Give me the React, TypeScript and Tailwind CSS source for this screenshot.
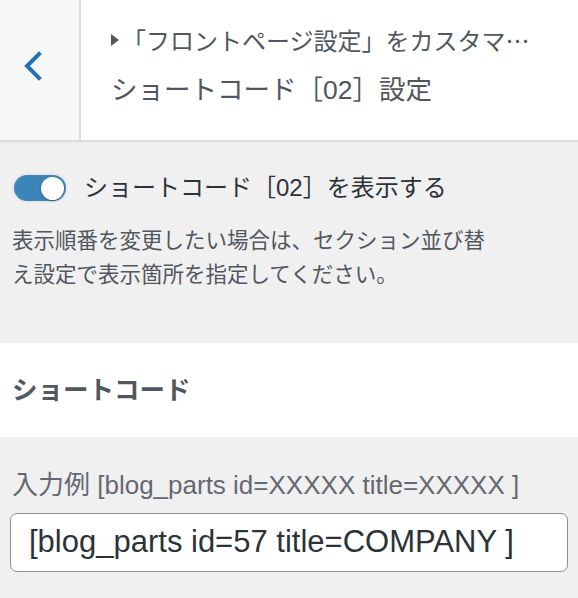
const jp = "font-['Helvetica_Neue','Liberation_Sans','Noto_Sans_CJK_JP',sans-serif]";
const cjk = "font-['Noto_Sans_CJK_JP',sans-serif]";

function Toggle() {
  return (
    <div className="rounded-full bg-[#e6e7e8] p-[2px]">
      <div className="flex h-[26px] w-[52px] items-center justify-end rounded-full bg-[#3c85b8] px-[2px]">
        <div className="h-[23px] w-[23px] rounded-full bg-white shadow-[0_1px_2px_rgba(0,0,0,0.35)]" />
      </div>
    </div>
  );
}

export default function App() {
  return (
    <div className={`h-[598px] w-[578px] overflow-hidden bg-[#f0f0f0] ${jp}`}>
      <div className="flex h-[142px] border-b-2 border-[#dcdcde] bg-white">
        <div className="flex w-[81px] items-start border-r-2 border-[#dcdcde] bg-[#f6f7f7] pl-[22px] pt-[51px]">
          <svg width="20" height="30" viewBox="0 0 20 30" fill="none">
            <polyline points="17,3 5,15 17,27" stroke="#2271b1" strokeWidth="4" strokeLinecap="square" strokeLinejoin="miter" />
          </svg>
        </div>
        <div className="flex flex-col pl-[30px] pt-[22px] text-[#50575e]">
          <div className="flex items-center text-[24px] leading-[36px]">
            <svg width="8" height="12" viewBox="0 0 8 12" className="mr-[3px]">
              <polygon points="0,0 8,6 0,12" fill="#50575e" />
            </svg>
            <span className={cjk}>「フロントページ設定」をカスタマ…</span>
          </div>
          <div className="mt-[14px] text-[26.5px] leading-[36px]">ショートコード［02］設定</div>
        </div>
      </div>

      <div className="px-[12px] pt-[30px]">
        <div className="flex items-center gap-[16px]">
          <Toggle />
          <span className="text-[24px] leading-[32px] text-[#2c3338]">ショートコード［02］を表示する</span>
        </div>
        <p className="mt-[20px] w-[476px] text-[21.5px] leading-[34px] text-[#50575e]">
          表示順番を変更したい場合は、セクション並び替え設定で表示箇所を指定してください。
        </p>
      </div>

      <div className="mt-[51px] flex h-[94px] items-center bg-white px-[12px]">
        <h3 className="text-[25.5px] font-bold text-[#50575e]">ショートコード</h3>
      </div>

      <div className="px-[10px] pt-[32px]">
        <div className="pl-[2px] text-[26px] leading-[32px] text-[#646970]">入力例 [blog_parts id=XXXXX title=XXXXX ]</div>
        <div className="mt-[12px] flex h-[59px] items-center rounded-[7px] border border-[#8c8f94] bg-white px-[18px] text-[31px] text-[#2c3338]">
          [blog_parts id=57 title=COMPANY ]
        </div>
      </div>
    </div>
  );
}
